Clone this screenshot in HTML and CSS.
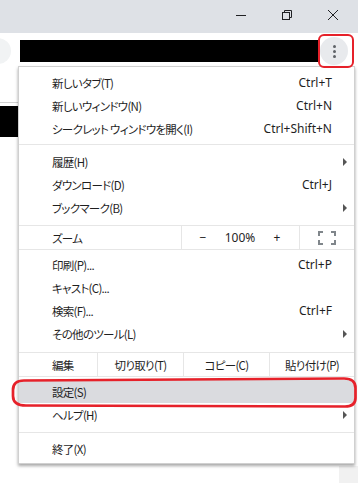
FILE: index.html
```html
<!DOCTYPE html>
<html lang="ja">
<head>
    <meta charset="UTF-8">
    <meta name="viewport" content="width=device-width, initial-scale=1.0">
    <title>Chrome メニュー</title>
    <link rel="stylesheet" href="styles.css">
</head>
<body>

<div class="window">
    <div class="titlebar">
        <div class="win-btn">
            <svg width="12" height="12" viewBox="0 0 12 12"><path d="M1 6.5h10" stroke="#202124" stroke-width="1"/></svg>
        </div>
        <div class="win-btn">
            <svg width="12" height="12" viewBox="0 0 12 12" fill="none" stroke="#202124" stroke-width="1">
                <rect x="1.5" y="3.5" width="7" height="7"/>
                <path d="M3.5 3.5v-2h7v7h-2"/>
            </svg>
        </div>
        <div class="win-btn">
            <svg width="12" height="12" viewBox="0 0 12 12"><path d="M1 1l10 10M11 1L1 11" stroke="#202124" stroke-width="1"/></svg>
        </div>
    </div>

    <div class="toolbar">
        <div class="nav-circle"></div>
        <div class="omnibox"></div>
        <div class="menu-btn">
            <span></span><span></span><span></span>
        </div>
    </div>

    <div class="content">
        <div class="left-strip">
            <div class="strip-block"></div>
        </div>
        <div class="right-strip">
            <div class="scroll-corner"></div>
        </div>
    </div>
</div>

<!-- メニュー -->
<div class="menu">
    <div class="item"><span class="label">新しいタブ(T)</span><span class="shortcut">Ctrl+T</span></div>
    <div class="item"><span class="label">新しいウィンドウ(N)</span><span class="shortcut">Ctrl+N</span></div>
    <div class="item"><span class="label">シークレット ウィンドウを開く(I)</span><span class="shortcut">Ctrl+Shift+N</span></div>
    <div class="sep"></div>
    <div class="item"><span class="label">履歴(H)</span><span class="arrow"></span></div>
    <div class="item"><span class="label">ダウンロード(D)</span><span class="shortcut">Ctrl+J</span></div>
    <div class="item"><span class="label">ブックマーク(B)</span><span class="arrow"></span></div>

    <div class="zoom-row">
        <div class="zoom-label label">ズーム</div>
        <div class="zoom-ctrl">
            <span class="zbtn">−</span>
            <span>100%</span>
            <span class="zbtn">+</span>
        </div>
        <div class="zoom-full">
            <svg width="18" height="14" viewBox="0 0 18 14" fill="none" stroke="#80868b" stroke-width="2">
                <path d="M1 5V1h4M13 1h4v4M17 9v4h-4M5 13H1V9"/>
            </svg>
        </div>
    </div>

    <div class="item"><span class="label">印刷(P)...</span><span class="shortcut">Ctrl+P</span></div>
    <div class="item"><span class="label">キャスト(C)...</span></div>
    <div class="item"><span class="label">検索(F)...</span><span class="shortcut">Ctrl+F</span></div>
    <div class="item"><span class="label">その他のツール(L)</span><span class="arrow"></span></div>

    <div class="edit-row">
        <div class="edit-label label">編集</div>
        <div class="edit-cell label">切り取り(T)</div>
        <div class="edit-cell label">コピー(C)</div>
        <div class="edit-cell label">貼り付け(P)</div>
    </div>

    <div class="item active"><span class="label">設定(S)</span></div>
    <div class="item"><span class="label">ヘルプ(H)</span><span class="arrow"></span></div>
    <div class="sep sep-low"></div>
    <div class="item"><span class="label">終了(X)</span></div>
</div>

<!-- 赤い注釈 -->
<div class="mark-btn"></div>
<svg class="mark-settings" width="358" height="40" viewBox="0 372 358 40">
    <path d="M24 380.5 L344 378.5 Q355.5 378.5 355.5 388 L355.5 398 Q355.5 406.5 345 406.5 L26 405.5 Q13 405.5 13 396 L13 390 Q13 380.5 24 380.5 Z"
          fill="none" stroke="#e6212a" stroke-width="2.7"/>
</svg>

</body>
</html>
```

FILE: styles.css
```css
* {
    box-sizing: border-box;
    margin: 0;
    padding: 0;
}

body {
    font-family: "Noto Sans", "Noto Sans CJK JP", sans-serif;
    font-size: 12px;
    color: #1f1f1f;
    background: #fff;
    width: 358px;
    height: 483px;
    overflow: hidden;
    position: relative;
}

.label {
    font-family: "Noto Sans CJK JP", "Noto Sans", sans-serif;
    font-size: 11.5px;
    font-feature-settings: "palt" 1;
    letter-spacing: -0.7px;
}

.window {
    display: flex;
    flex-direction: column;
    height: 483px;
}

.titlebar {
    height: 33px;
    background: #dee1e6;
    display: flex;
    justify-content: flex-end;
    padding-right: 2px;
}

.win-btn {
    width: 46px;
    height: 29px;
    display: flex;
    justify-content: center;
    align-items: center;
}

.toolbar {
    height: 36px;
    display: flex;
    align-items: center;
}

.nav-circle {
    width: 26px;
    height: 26px;
    margin-left: -15px;
    border-radius: 50%;
    background: #f1f3f4;
    flex-shrink: 0;
}

.omnibox {
    width: 298px;
    height: 22px;
    margin-left: 9px;
    background: #000;
}

.menu-btn {
    width: 28px;
    height: 28px;
    margin-left: 2px;
    border-radius: 50%;
    background: #e8eaed;
    display: flex;
    flex-direction: column;
    align-items: center;
    justify-content: center;
    gap: 2px;
}

.menu-btn span {
    width: 3px;
    height: 3px;
    border-radius: 50%;
    background: #5f6368;
}

.content {
    flex: 1;
    display: flex;
    justify-content: space-between;
}

.left-strip {
    width: 18px;
    margin-top: 33px;
    border-top: 1px solid #d2d2d2;
}

.strip-block {
    height: 31px;
    margin-top: 3px;
    background: #000;
}

.right-strip {
    display: flex;
    align-items: flex-end;
}

.scroll-corner {
    width: 19px;
    height: 17px;
    background: #f1f1f1;
}

/* menu */

.menu {
    position: absolute;
    left: 18px;
    top: 66px;
    width: 337px;
    background: #fff;
    border: 1px solid #d0d0d0;
    box-shadow: 0 2px 3px rgba(0, 0, 0, 0.35);
    padding: 4px 0 3px;
}

.item {
    height: 23px;
    display: flex;
    align-items: center;
    padding: 0 7px 0 33px;
    white-space: nowrap;
}

.item.active {
    background: #dadbdf;
}

.shortcut {
    margin-left: auto;
    margin-right: 15px;
}

.arrow {
    margin-left: auto;
    width: 0;
    height: 0;
    border-left: 4px solid #555;
    border-top: 4px solid transparent;
    border-bottom: 4px solid transparent;
}

.sep {
    height: 1px;
    background: #e6e6e6;
    margin: 4px 0 5px;
}

.sep-low {
    margin: 6px 0 4px;
}

.zoom-row,
.edit-row {
    height: 25px;
    display: flex;
    border-top: 1px solid #e6e6e6;
    border-bottom: 1px solid #e6e6e6;
    margin: 6px 0 3px;
}

.edit-row {
    margin-top: 7px;
}

.zoom-label {
    width: 162px;
    padding-left: 33px;
    display: flex;
    align-items: center;
}

.zoom-ctrl {
    width: 118px;
    border-left: 1px solid #e6e6e6;
    display: flex;
    align-items: center;
    justify-content: space-between;
    padding: 0 9px 0 8px;
}

.zbtn {
    width: 26px;
    text-align: center;
}

.zoom-full {
    flex: 1;
    border-left: 1px solid #e6e6e6;
    display: flex;
    align-items: center;
    justify-content: center;
}

.edit-label {
    width: 78px;
    padding-left: 33px;
    display: flex;
    align-items: center;
}

.edit-cell {
    width: 86px;
    border-left: 1px solid #e6e6e6;
    display: flex;
    align-items: center;
    justify-content: center;
}

.edit-cell:last-child {
    flex: 1;
}

/* annotations */

.mark-btn {
    position: absolute;
    left: 318px;
    top: 34px;
    width: 36px;
    height: 34px;
    border: 2.5px solid #e6212a;
    border-radius: 6px;
}

.mark-settings {
    position: absolute;
    left: 0;
    top: 372px;
}
```
